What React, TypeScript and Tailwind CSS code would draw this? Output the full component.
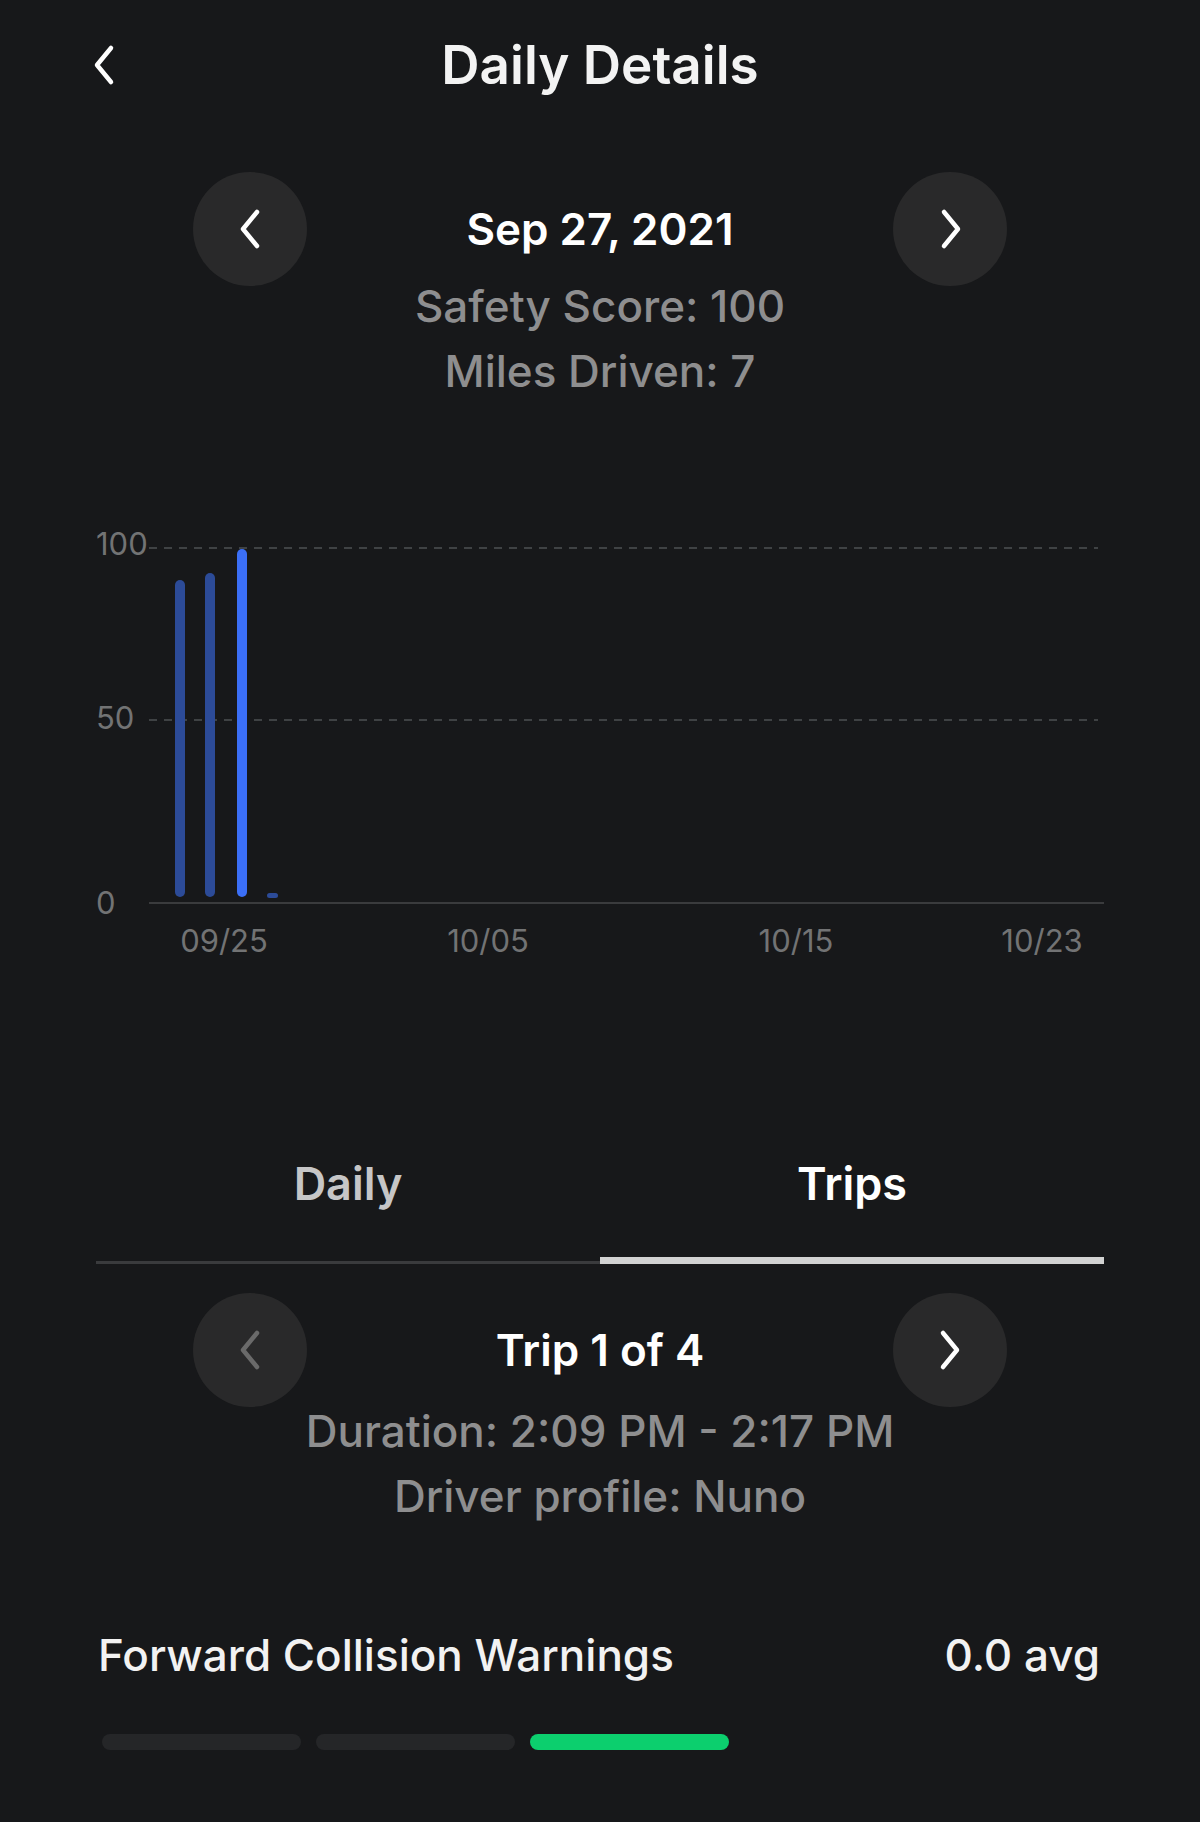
import React from "react";

const bars = [
  { x: 180, top: 580, color: "#2c4b98" },
  { x: 210, top: 573, color: "#2c4b98" },
  { x: 242, top: 549, color: "#3b6ff7" },
];

const xLabels = [
  { x: 224, label: "09/25" },
  { x: 488, label: "10/05" },
  { x: 796, label: "10/15" },
  { x: 1042, label: "10/23" },
];

function Chevron({ dir, color }: { dir: "left" | "right"; color: string }) {
  const d = dir === "left" ? "M19 4 L5 21 L19 38" : "M6 4 L20 21 L6 38";
  return (
    <svg width="25" height="42" viewBox="0 0 25 42" fill="none">
      <path d={d} stroke={color} strokeWidth="4.5" strokeLinecap="round" strokeLinejoin="round" />
    </svg>
  );
}

function NavRow({ title, prevDisabled }: { title: string; prevDisabled?: boolean }) {
  return (
    <div className="flex h-[114px] items-center justify-between px-[193px]">
      <button className="flex h-[114px] w-[114px] items-center justify-center rounded-full bg-[#29292a]">
        <Chevron dir="left" color={prevDisabled ? "#6a6a6a" : "#ffffff"} />
      </button>
      <div className="text-[44px] font-semibold leading-none text-white">{title}</div>
      <button className="flex h-[114px] w-[114px] items-center justify-center rounded-full bg-[#29292a]">
        <Chevron dir="right" color="#ffffff" />
      </button>
    </div>
  );
}

function Chart() {
  // svg coords: page y minus 500
  const y = (v: number) => v - 500;
  return (
    <svg width="1200" height="480" viewBox="0 0 1200 480" className="mt-[96px] block">
      <line x1="149" y1={y(548)} x2="1098" y2={y(548)} stroke="#4e5053" strokeWidth="1.5" strokeDasharray="8 7" />
      <line x1="149" y1={y(720)} x2="1098" y2={y(720)} stroke="#4e5053" strokeWidth="1.5" strokeDasharray="8 7" />
      <line x1="149" y1={y(903)} x2="1104" y2={y(903)} stroke="#3a3b3d" strokeWidth="2" />
      <g fontFamily="Inter, sans-serif" fontSize="31" fill="#727374">
        <text x="96" y={y(543)} dominantBaseline="central">100</text>
        <text x="96" y={y(717)} dominantBaseline="central">50</text>
        <text x="96" y={y(902)} dominantBaseline="central">0</text>
        {xLabels.map((l) => (
          <text key={l.label} x={l.x} y={y(940)} textAnchor="middle" dominantBaseline="central">
            {l.label}
          </text>
        ))}
      </g>
      {bars.map((b) => (
        <rect key={b.x} x={b.x - 5} y={y(b.top)} width="10" height={897 - b.top} rx="5" fill={b.color} />
      ))}
      <rect x="267" y={y(893)} width="11" height="5" rx="2.5" fill="#2c4b98" />
    </svg>
  );
}

export default function App() {
  return (
    <div className="min-h-[1822px] w-[1200px] bg-[#17181a] font-['Inter',sans-serif]">
      <header className="grid h-[130px] grid-cols-[1fr_auto_1fr] items-center px-[92px]">
        <div>
          <Chevron dir="left" color="#ffffff" />
        </div>
        <h1 className="text-[53px] font-semibold leading-none text-[#f3f3f3]">Daily Details</h1>
        <div />
      </header>

      <div className="mt-[42px]">
        <NavRow title="Sep 27, 2021" />
      </div>
      <div className="-mt-[12px] text-center text-[44px] font-medium leading-[65px] text-[#8e8e8f]">
        <div>Safety Score: 100</div>
        <div>Miles Driven: 7</div>
      </div>

      <Chart />

      <div className="mx-[96px] mt-[164px]">
        <div className="flex text-[45px] font-semibold leading-[80px]">
          <div className="flex-1 text-center text-[#c6c6c7]">Daily</div>
          <div className="flex-1 text-center text-white">Trips</div>
        </div>
        <div className="mt-[32px] flex h-[8px] items-end">
          <div className="h-[3px] flex-1 bg-[#3a3b3d]" />
          <div className="h-[7px] flex-1 bg-[#d2d2d2]" />
        </div>
      </div>

      <div className="mt-[29px]">
        <NavRow title="Trip 1 of 4" prevDisabled />
      </div>
      <div className="-mt-[8px] text-center text-[44px] font-medium leading-[65px] text-[#8e8e8f]">
        <div>Duration: 2:09 PM - 2:17 PM</div>
        <div>Driver profile: Nuno</div>
      </div>

      <div className="mt-[96px] flex items-center justify-between pl-[98px] pr-[100px] text-[44px] font-medium leading-[60px] text-[#f2f2f2]">
        <span>Forward Collision Warnings</span>
        <span>0.0 avg</span>
      </div>
      <div className="mt-[49px] flex gap-[15px] pl-[102px]">
        <div className="h-[16px] w-[199px] rounded-full bg-[#252628]" />
        <div className="h-[16px] w-[199px] rounded-full bg-[#252628]" />
        <div className="h-[16px] w-[199px] rounded-full bg-[#0ccf6e]" />
      </div>
    </div>
  );
}
